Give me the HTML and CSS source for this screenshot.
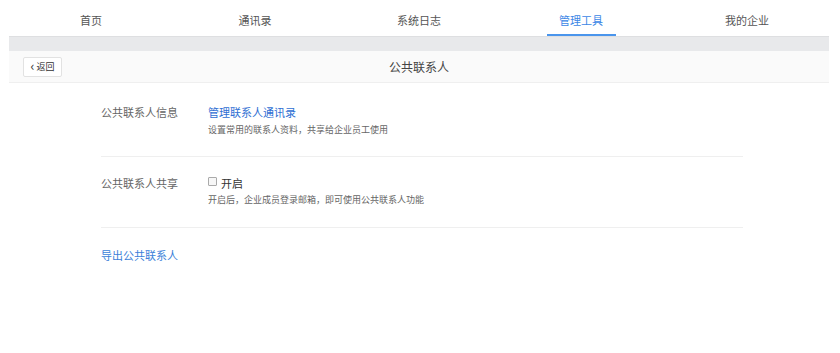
FILE: index.html
```html
<!DOCTYPE html>
<html lang="zh-CN">
<head>
<meta charset="utf-8">
<title>公共联系人</title>
<link rel="stylesheet" href="styles.css">
</head>
<body>
<div class="page">
  <nav class="nav">
    <a class="tab"><span class="tab-text">首页</span></a>
    <a class="tab"><span class="tab-text">通讯录</span></a>
    <a class="tab"><span class="tab-text">系统日志</span></a>
    <a class="tab active"><span class="tab-text">管理工具</span></a>
    <a class="tab"><span class="tab-text">我的企业</span></a>
  </nav>
  <div class="band"></div>
  <div class="titlebar">
    <button class="back"><span class="chev">‹</span>返回</button>
    <div class="title">公共联系人</div>
  </div>
  <main class="content">
    <section class="row">
      <div class="label">公共联系人信息</div>
      <div class="field">
        <a class="link">管理联系人通讯录</a>
        <div class="desc">设置常用的联系人资料，共享给企业员工使用</div>
      </div>
    </section>
    <section class="row row2">
      <div class="label">公共联系人共享</div>
      <div class="field">
        <label class="check"><span class="box"></span>开启</label>
        <div class="desc desc2">开启后，企业成员登录邮箱，即可使用公共联系人功能</div>
      </div>
    </section>
    <div class="export"><a class="link">导出公共联系人</a></div>
  </main>
</div>
</body>
</html>
```
FILE: styles.css
```css
* { box-sizing: border-box; }
html, body { margin: 0; padding: 0; background: #fff; }
body {
  font-family: "Noto Sans CJK SC", "Noto Sans", sans-serif;
  color: #555;
}
.page { padding: 0 11px 0 9px; }
.nav {
  display: grid;
  grid-template-columns: repeat(5, 1fr);
  height: 36px;
  background: #fff;
}
.tab {
  display: flex;
  justify-content: center;
  color: #555;
  font-size: 11px;
  text-decoration: none;
}
.tab-text {
  display: block;
  height: 36px;
  line-height: 16px;
  padding-top: 12px;
  width: 69px;
  text-align: center;
  border-bottom: 2px solid transparent;
}
.tab.active { transform: translateX(-2px); }
.tab.active .tab-text { color: #3b87e6; border-bottom-color: #4a95ec; }
.band {
  height: 15px;
  background: #e8e9eb;
  border-top: 1px solid #dedfe1;
}
.titlebar {
  height: 32px;
  background: #fafafa;
  border-bottom: 1px solid #efefef;
  display: flex;
  align-items: center;
  position: relative;
  padding-left: 14px;
}
.back {
  width: 39px;
  height: 20px;
  background: #fff;
  border: 1px solid #e2e2e2;
  border-radius: 2px;
  font-family: inherit;
  font-size: 9px;
  color: #333;
  padding: 0;
  display: flex;
  align-items: center;
  justify-content: center;
  gap: 2px;
}
.chev { font-size: 13px; line-height: 10px; margin-top: -2px; }
.title {
  position: absolute;
  left: 0; right: 0;
  text-align: center;
  font-size: 12px;
  color: #444;
  pointer-events: none;
}
.content { padding: 21px 0 0 92px; width: 734px; }
.row {
  display: flex;
  border-bottom: 1px solid #efefef;
  padding-bottom: 19px;
}
.row2 { padding-top: 18px; padding-bottom: 20px; }
.label {
  width: 107px;
  font-size: 11px;
  line-height: 16px;
  color: #666;
}
.field { display: flex; flex-direction: column; }
.link { color: #2f6fd3; font-size: 11px; line-height: 16px; text-decoration: none; }
.desc { font-size: 9px; line-height: 14px; color: #666; margin-top: 3px; }
.desc2 { margin-top: 2px; }
.check {
  display: flex;
  align-items: center;
  font-size: 11px;
  line-height: 16px;
  color: #333;
  gap: 4px;
}
.box {
  width: 9px;
  height: 9px;
  border: 1px solid #aaa;
  border-radius: 1px;
  background: #f7f7f7;
  margin-top: -4px;
}
.export { display: flex; padding-top: 19px; }
.export .link { color: #3b7fd9; }
```
